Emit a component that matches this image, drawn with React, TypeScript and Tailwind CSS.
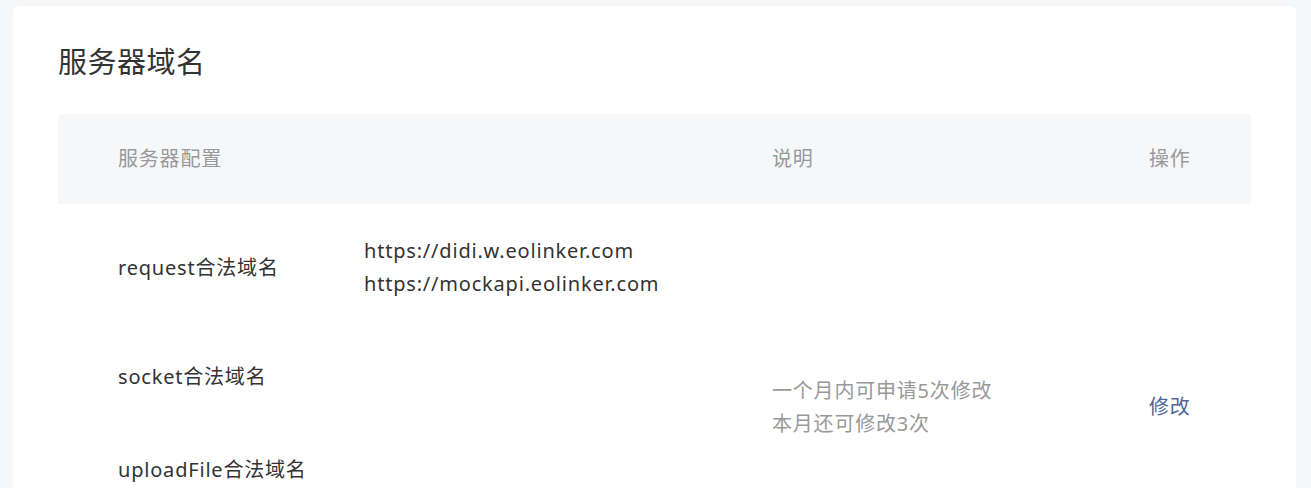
const FONT = '"Noto Sans", "Noto Sans CJK SC", sans-serif';

const rows = [
  {
    name: "request合法域名",
    urls: ["https://didi.w.eolinker.com", "https://mockapi.eolinker.com"],
  },
  { name: "socket合法域名", urls: [] },
  { name: "uploadFile合法域名", urls: [] },
  { name: "downloadFile合法域名", urls: [] },
];

export default function App() {
  return (
    <div className="min-h-screen bg-[#f5f6f8] pl-[13px] pr-[15px] pt-[6px]" style={{ fontFamily: FONT }}>
      <div className="rounded-[6px] bg-white px-[45px] pb-10 pt-[36px]">
        <h1 className="text-[29px] leading-[40px] tracking-[0.5px] text-[#333]">服务器域名</h1>

        <div className="mt-[32px] tracking-[0.8px]">
          {/* header */}
          <div className="flex h-[90px] items-center rounded-[2px] bg-[#f6f7f9] text-[20px] text-[#999]">
            <div className="w-[714px] pl-[60px]">服务器配置</div>
            <div className="w-[377px]">说明</div>
            <div>操作</div>
          </div>

          {/* body: description and action are centred across all rows */}
          <div className="flex">
            <div className="w-[714px]">
              {rows.map((r) => (
                <div key={r.name} className="flex items-center py-[30px] text-[20px] leading-[33px] text-[#333]">
                  <div className="w-[306px] pl-[60px]">{r.name}</div>
                  <div className="flex flex-col">
                    {r.urls.length ? r.urls.map((u) => <div key={u}>{u}</div>) : <div>&nbsp;</div>}
                  </div>
                </div>
              ))}
            </div>
            <div className="flex w-[377px] flex-col justify-center text-[20px] leading-[33px] text-[#999]">
              <div>一个月内可申请5次修改</div>
              <div>本月还可修改3次</div>
            </div>
            <div className="flex items-center">
              <button type="button" className="text-[20px] leading-[33px] tracking-[0.8px] text-[#4f6699]">
                修改
              </button>
            </div>
          </div>
        </div>
      </div>
    </div>
  );
}
